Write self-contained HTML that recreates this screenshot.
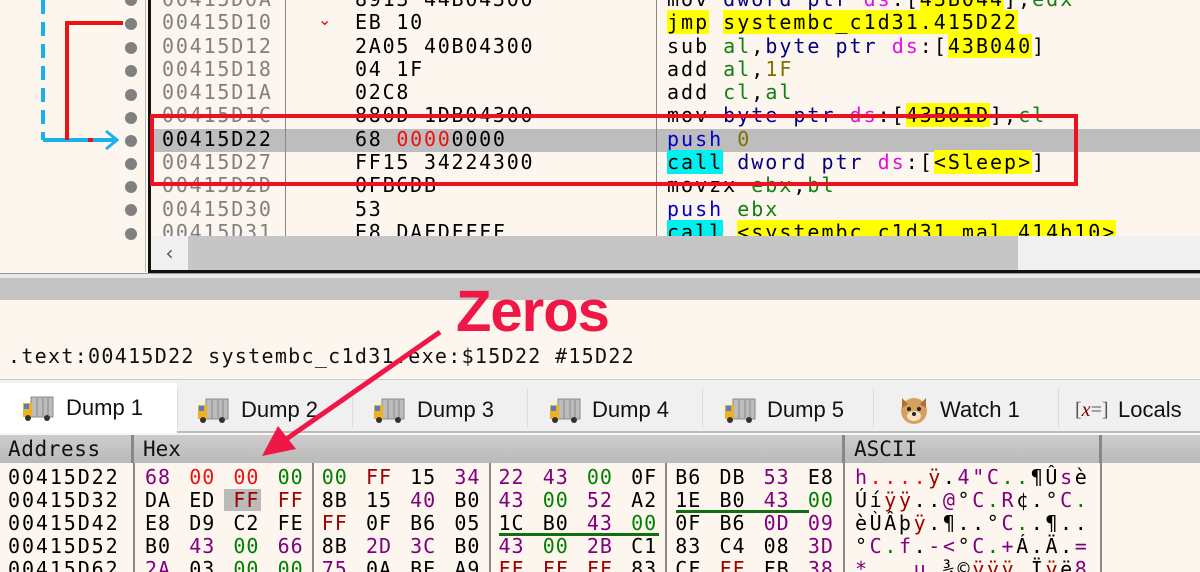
<!DOCTYPE html>
<html><head><meta charset="utf-8">
<style>
*{margin:0;padding:0;box-sizing:border-box}
html,body{width:1200px;height:572px;overflow:hidden}
body{background:#fdf6ee;position:relative;font-family:"DejaVu Sans Mono","Liberation Mono",monospace}
.a{position:absolute;white-space:pre}
.dis{font-size:20px;letter-spacing:1.75px;line-height:23.3px}
.ins{font-size:20px;letter-spacing:2px;line-height:23.3px}
.hx{font-size:20px;line-height:23px}
.g{color:#808080}.k{color:#000}.bl{color:#0000c8}.gr{color:#108010}.mg{color:#e010e0}.nv{color:#000080}.ol{color:#807000}
.y{background:#ffff00}.c{background:#00f0f0}
.p{color:#800080}.z{color:#008000}.r{color:#a00000}.rr{color:#ee1111}
.row{height:23px;white-space:nowrap}
.row b{display:inline-block;width:44.2px;font-weight:normal;letter-spacing:1px}
.tab{position:absolute;top:384px;height:48px;font-family:"Liberation Sans",sans-serif;font-size:22px;color:#111;line-height:48px}
</style></head><body>
<div class="a" style="left:0;top:0;width:146px;height:272px;background:#fdf6ee;border-right:1px solid #bbb"></div>
<svg class="a" style="left:0;top:0" width="150" height="272">
<line x1="43" y1="0" x2="43" y2="140" stroke="#1ab0ee" stroke-width="4" stroke-dasharray="14,8"/>
<line x1="43" y1="140" x2="114" y2="140" stroke="#1ab0ee" stroke-width="4"/>
<polyline points="106,131 117,140 106,149" fill="none" stroke="#1ab0ee" stroke-width="3"/>
<polyline points="123,23 67,23 67,140" fill="none" stroke="#ee1111" stroke-width="4"/>
<rect x="88" y="138" width="5" height="4" fill="#ee1111"/>
<g fill="#808080"><circle cx="131" cy="0" r="6"/><circle cx="131" cy="24" r="6"/><circle cx="131" cy="48" r="6"/><circle cx="131" cy="71" r="6"/><circle cx="131" cy="95" r="6"/><circle cx="131" cy="118" r="6"/><circle cx="131" cy="141" r="6"/><circle cx="131" cy="164" r="6"/><circle cx="131" cy="187" r="6"/><circle cx="131" cy="210" r="6"/><circle cx="131" cy="234" r="6"/></g>
</svg>
<div class="a" style="left:148px;top:0;width:3px;height:273px;background:#111"></div>
<div class="a" style="left:151px;top:129px;width:1049px;height:23px;background:#bdbdbd"></div>
<div class="a" style="left:285px;top:0;width:1px;height:236px;background:#888"></div>
<div class="a" style="left:656px;top:0;width:1px;height:236px;background:#888"></div>
<div class="a dis g" style="left:162px;top:-12px;letter-spacing:1.8px">00415D0A
00415D10
00415D12
00415D18
00415D1A
00415D1C
<span class="k">00415D22</span>
00415D27
00415D2D
00415D30
00415D31</div>
<div class="a" style="left:318px;top:10px;color:#e00;font-size:16px;font-family:'DejaVu Sans'">⌄</div>
<div class="a dis k" style="left:355px;top:-12px">8913 44B04300
EB 10
2A05 40B04300
04 1F
02C8
880D 1DB04300
68 <span style="color:#ee1111">0000</span>0000
FF15 34224300
0FB6DB
53
E8 DAFDFFFF</div>
<div class="a ins k" style="left:667px;top:-12px">mov <span class="nv">dword ptr</span> <span class="mg">ds</span>:[<span class="y">43B044</span>],<span class="gr">edx</span>
<span class="y">jmp</span> <span class="y">systembc_c1d31.415D22</span>
sub <span class="gr">al</span>,<span class="nv">byte ptr</span> <span class="mg">ds</span>:[<span class="y">43B040</span>]
add <span class="gr">al</span>,<span class="ol">1F</span>
add <span class="gr">cl</span>,<span class="gr">al</span>
mov <span class="nv">byte ptr</span> <span class="mg">ds</span>:[<span class="y">43B01D</span>],<span class="gr">cl</span>
<span class="bl">push</span> <span class="ol">0</span>
<span class="c">call</span> <span class="nv">dword ptr</span> <span class="mg">ds</span>:[<span class="y">&lt;Sleep&gt;</span>]
movzx <span class="gr">ebx</span>,<span class="gr">bl</span>
<span class="bl">push</span> <span class="gr">ebx</span>
<span class="c">call</span> <span class="y">&lt;systembc_c1d31.mal_414b10&gt;</span></div>
<div class="a" style="left:150px;top:114px;width:928px;height:72px;border:4px solid #ee1122"></div>
<div class="a" style="left:151px;top:236px;width:1049px;height:35px;background:#c6c6c6"></div>
<div class="a" style="left:151px;top:236px;width:37px;height:35px;background:#f0f0f0;font-family:'DejaVu Sans';font-size:20px;color:#555;text-align:center;line-height:35px">‹</div>
<div class="a" style="left:1018px;top:236px;width:182px;height:35px;background:#f0f0f0"></div>
<div class="a" style="left:148px;top:270px;width:1052px;height:3px;background:#111"></div>
<div class="a" style="left:0;top:273px;width:1200px;height:5px;background:#e8e8e8;border-top:1px solid #999"></div>
<div class="a" style="left:0;top:278px;width:1200px;height:22px;background:#c3c3c3"></div>
<div class="a" style="left:8px;top:344px;font-size:20px;letter-spacing:1.3px;color:#111">.text:00415D22 systembc_c1d31.exe:$15D22 #15D22</div>
<div class="a" style="left:0;top:379px;width:1200px;height:54px;background:#f0f0f0;border-top:1px solid #ccc;border-bottom:2px solid #bbb"></div>
<div class="a" style="left:0;top:383px;width:177px;height:50px;background:#fff"></div>
<div class="a" style="left:177px;top:388px;width:1px;height:40px;background:#ddd"></div>
<div class="a" style="left:352px;top:388px;width:1px;height:40px;background:#ddd"></div>
<div class="a" style="left:527px;top:388px;width:1px;height:40px;background:#ddd"></div>
<div class="a" style="left:702px;top:388px;width:1px;height:40px;background:#ddd"></div>
<div class="a" style="left:873px;top:388px;width:1px;height:40px;background:#ddd"></div>
<div class="a" style="left:1058px;top:388px;width:1px;height:40px;background:#ddd"></div>
<svg width="0" height="0" style="position:absolute"><defs><g id="tr"><rect x="8" y="2" width="22" height="20" fill="#bcbcbc" stroke="#888"/><line x1="14" y1="3" x2="14" y2="21" stroke="#888"/><line x1="20" y1="3" x2="20" y2="21" stroke="#888"/><line x1="25" y1="3" x2="25" y2="21" stroke="#888"/><rect x="0" y="8" width="9" height="14" fill="#f0b020"/><rect x="1" y="9" width="5" height="5" fill="#5080c0"/><circle cx="5" cy="23" r="3" fill="#333"/><circle cx="24" cy="23" r="3" fill="#333"/></g></defs></svg>
<svg class="a" style="left:23px;top:395px" width="32" height="28"><use href="#tr"/></svg>
<svg class="a" style="left:198px;top:397px" width="32" height="28"><use href="#tr"/></svg>
<svg class="a" style="left:374px;top:397px" width="32" height="28"><use href="#tr"/></svg>
<svg class="a" style="left:550px;top:397px" width="32" height="28"><use href="#tr"/></svg>
<svg class="a" style="left:725px;top:397px" width="32" height="28"><use href="#tr"/></svg>
<svg class="a" style="left:898px;top:394px" width="32" height="32"><circle cx="16" cy="17" r="13" fill="#d8a060"/><path d="M4 4 L10 10 L4 14Z M28 4 L22 10 L28 14Z" fill="#b07030"/><ellipse cx="16" cy="22" rx="7" ry="5" fill="#f5e0c0"/><circle cx="11" cy="15" r="2" fill="#222"/><circle cx="21" cy="15" r="2" fill="#222"/><circle cx="16" cy="20" r="2" fill="#222"/></svg>
<div class="tab" style="left:66px">Dump 1</div>
<div class="tab" style="left:241px;top:386px">Dump 2</div>
<div class="tab" style="left:417px;top:386px">Dump 3</div>
<div class="tab" style="left:592px;top:386px">Dump 4</div>
<div class="tab" style="left:767px;top:386px">Dump 5</div>
<div class="tab" style="left:940px;top:386px">Watch 1</div>
<div class="tab" style="left:1075px;top:386px;font-family:'Liberation Serif',serif;font-size:20px;color:#555">[<i style="color:#800000">x</i>=]</div>
<div class="tab" style="left:1118px;top:386px">Locals</div>
<div class="a" style="left:0;top:435px;width:1200px;height:28px;background:linear-gradient(#cdcdcd,#b9b9b9)"></div>
<div class="a" style="left:131px;top:435px;width:3px;height:28px;background:#888"></div>
<div class="a" style="left:842px;top:435px;width:3px;height:28px;background:#888"></div>
<div class="a" style="left:1099px;top:435px;width:3px;height:28px;background:#888"></div>
<div class="a" style="left:8px;top:437px;font-size:21px;color:#111;letter-spacing:0.6px">Address</div>
<div class="a" style="left:143px;top:437px;font-size:21px;color:#111">Hex</div>
<div class="a" style="left:854px;top:437px;font-size:21px;color:#111">ASCII</div>
<div class="a" style="left:133px;top:463px;width:2px;height:109px;background:#888"></div>
<div class="a" style="left:312px;top:463px;width:2px;height:109px;background:#888"></div>
<div class="a" style="left:489px;top:463px;width:2px;height:109px;background:#888"></div>
<div class="a" style="left:665px;top:463px;width:2px;height:109px;background:#888"></div>
<div class="a" style="left:843px;top:463px;width:2px;height:109px;background:#888"></div>
<div class="a" style="left:1100px;top:463px;width:2px;height:109px;background:#888"></div>
<div class="a" style="left:224px;top:489px;width:37px;height:22px;background:#bbb"></div>
<div class="a" style="left:676px;top:510px;width:133px;height:3px;background:#107010"></div>
<div class="a" style="left:499px;top:533px;width:160px;height:3px;background:#107010"></div>
<div class="a hx k" style="left:8px;top:466px;letter-spacing:1.9px">00415D22
00415D32
00415D42
00415D52
00415D62</div>
<div class="a hx k" style="left:145px;top:466px;white-space:normal;width:700px"><div class="row"><b class="p">68</b><b class="rr">00</b><b class="rr">00</b><b class="z">00</b><b class="z">00</b><b class="r">FF</b><b>15</b><b class="p">34</b><b class="p">22</b><b class="p">43</b><b class="z">00</b><b>0F</b><b>B6</b><b>DB</b><b class="p">53</b><b>E8</b></div><div class="row"><b>DA</b><b>ED</b><b class="r">FF</b><b class="r">FF</b><b>8B</b><b>15</b><b class="p">40</b><b>B0</b><b class="p">43</b><b class="z">00</b><b class="p">52</b><b>A2</b><b>1E</b><b>B0</b><b class="p">43</b><b class="z">00</b></div><div class="row"><b>E8</b><b>D9</b><b>C2</b><b>FE</b><b class="r">FF</b><b>0F</b><b>B6</b><b>05</b><b>1C</b><b>B0</b><b class="p">43</b><b class="z">00</b><b>0F</b><b>B6</b><b class="p">0D</b><b class="p">09</b></div><div class="row"><b>B0</b><b class="p">43</b><b class="z">00</b><b class="p">66</b><b>8B</b><b class="p">2D</b><b class="p">3C</b><b>B0</b><b class="p">43</b><b class="z">00</b><b class="p">2B</b><b>C1</b><b>83</b><b>C4</b><b>08</b><b class="p">3D</b></div><div class="row"><b class="p">2A</b><b>03</b><b class="z">00</b><b class="z">00</b><b class="p">75</b><b>0A</b><b>BE</b><b>A9</b><b class="r">FF</b><b class="r">FF</b><b class="r">FF</b><b>83</b><b>CF</b><b class="r">FF</b><b>FB</b><b class="p">38</b></div></div>
<div class="a hx k" style="left:855px;top:466px;letter-spacing:2.6px"><span class="p">h</span><span class="rr">....</span><span class="r">ÿ</span>.<span class="p">4"C</span><span class="z">..</span>¶Û<span class="p">s</span>è
Úí<span class="r">ÿÿ</span>..<span class="p">@</span>°<span class="p">C</span><span class="z">.</span><span class="p">R</span>¢.°<span class="p">C</span><span class="z">.</span>
èÙÂþ<span class="r">ÿ</span>.¶..°<span class="p">C</span><span class="z">.</span>.¶..
°<span class="p">C</span><span class="z">.</span><span class="p">f</span>.<span class="p">-&lt;</span>°<span class="p">C</span><span class="z">.</span><span class="p">+</span>Á.Ä.<span class="p">=</span>
<span class="p">*</span>.<span class="z">..</span><span class="p">u</span>.¾©<span class="r">ÿÿÿ</span>.Ï<span class="r">ÿ</span>ë<span class="p">8</span></div>
<div class="a" style="left:456px;top:278px;font-family:'Liberation Sans',sans-serif;font-weight:bold;font-size:58px;color:#ee1745;letter-spacing:-1px">Zeros</div>
<svg class="a" style="left:0;top:0" width="1200" height="572">
<line x1="440" y1="332" x2="285" y2="440" stroke="#ee1745" stroke-width="5"/>
<polygon points="262,456 278,426 296,449" fill="#ee1745"/>
</svg>
</body></html>
